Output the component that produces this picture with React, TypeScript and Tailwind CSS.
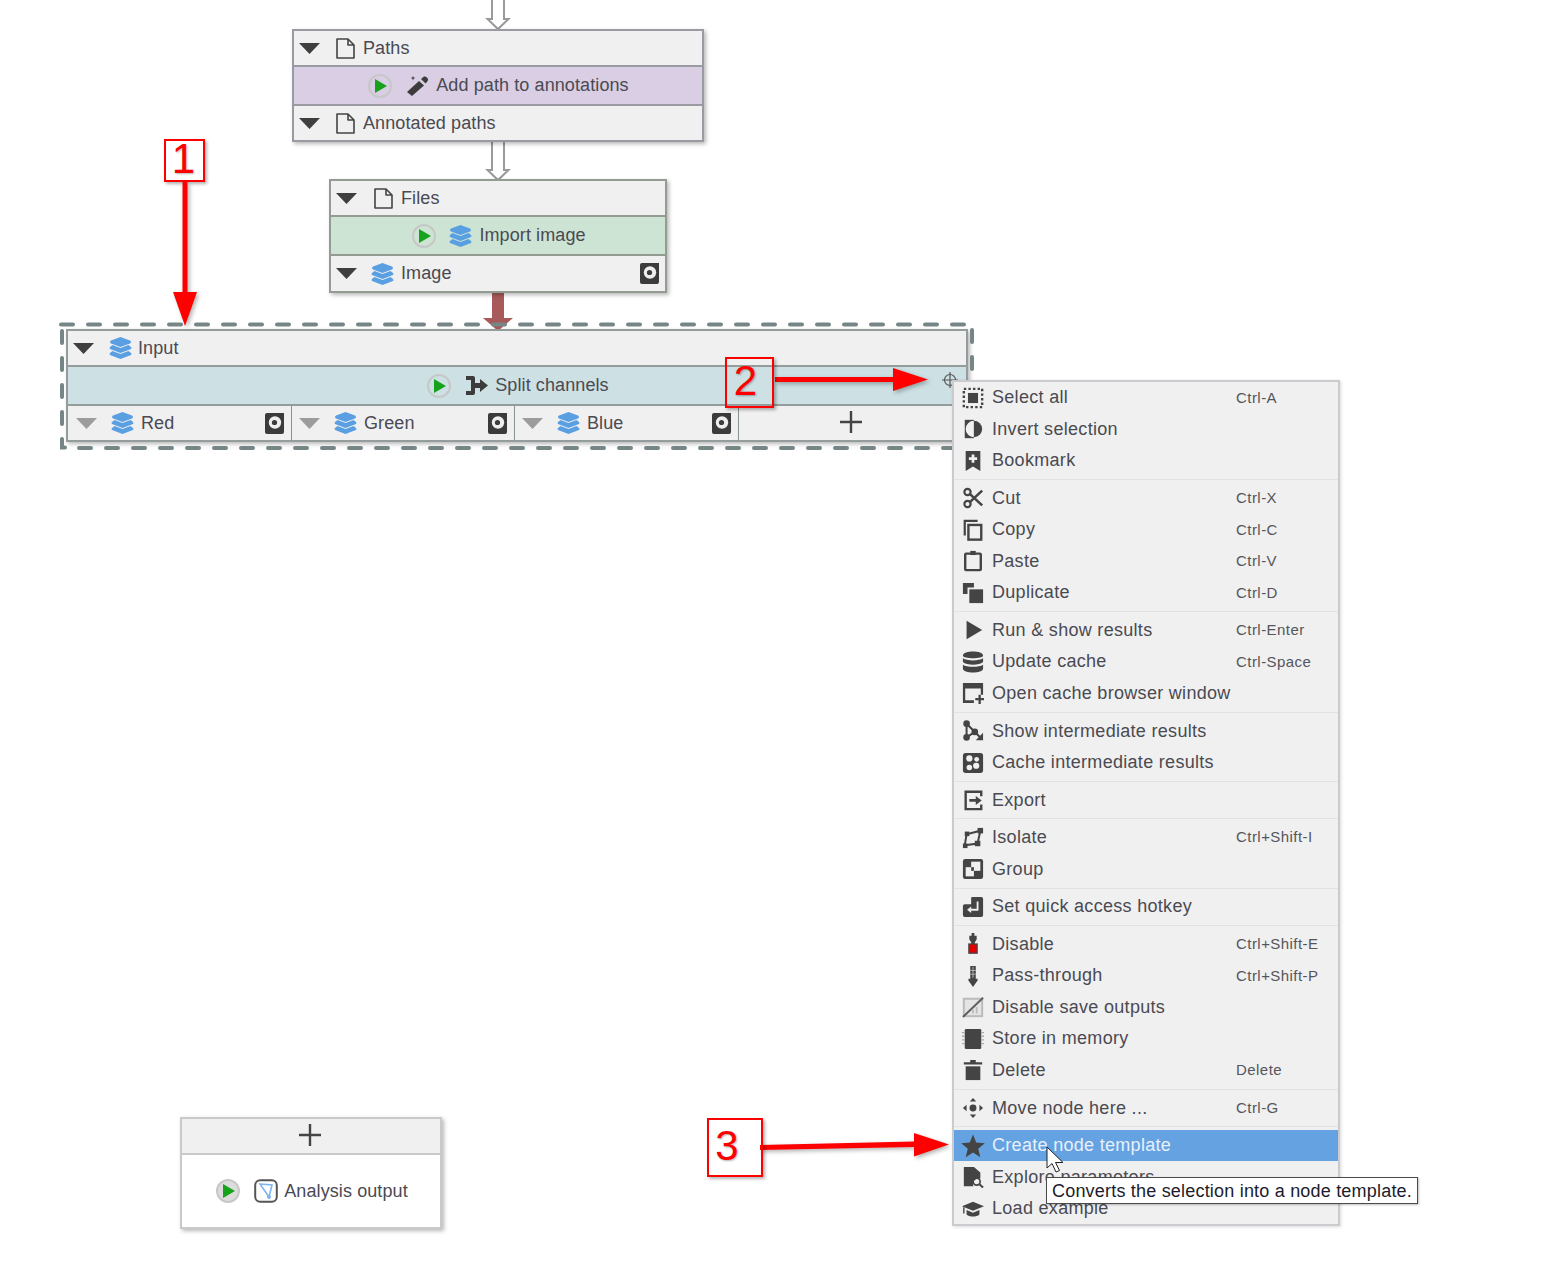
import React from "react";

const F = "#444444";
const Svg = ({ s = 22, children, v = "0 0 24 24" }: { s?: number; children: React.ReactNode; v?: string }) => (
  <svg width={s} height={s} viewBox={v} className="block shrink-0">{children}</svg>
);

const Caret = ({ gray }: { gray?: boolean }) => (
  <svg width="21" height="11" viewBox="0 0 21 11" className="block shrink-0"><path d="M0 0H21L10.5 11Z" fill={gray ? "#9c9c9c" : "#3f3f3f"} /></svg>
);
const FileI = () => (
  <svg width="19" height="21" viewBox="0 0 19 21" className="block shrink-0"><path d="M1 1H12L18 7V20H1Z M12 1V7H18" fill="none" stroke="#444" strokeWidth="1.6" strokeLinejoin="round" /></svg>
);
const Layers = () => (
  <svg width="23" height="22" viewBox="0 0 23 22" className="block shrink-0" fill="#5b9fe3">
    <path d="M11.5 0 L21 3.5 Q23 5 21 6.5 L11.5 10 L2 6.5 Q0 5 2 3.5Z" />
    <path d="M3.5 8 L11.5 11 L19.5 8 L22 10 Q23 11 22 12 L11.5 16 L1 12 Q0 11 1 10Z" />
    <path d="M3.5 14 L11.5 17 L19.5 14 L22 16 Q23 17 22 18 L11.5 22 L1 18 Q0 17 1 16Z" />
  </svg>
);
const Disk = () => (
  <svg width="19" height="21" viewBox="0 0 19 21" className="block shrink-0">
    <path d="M2 0H19V19Q19 21 17 21H2Q0 21 0 19V2Q0 0 2 0Z" fill="#3b3b3b" />
    <circle cx="10" cy="9.5" r="6.2" fill="#eee" /><circle cx="9.5" cy="9.5" r="2.6" fill="#3b3b3b" />
  </svg>
);
const Play = ({ bg = "bg-transparent" }: { bg?: string }) => (
  <div className={`flex h-[24px] w-[24px] shrink-0 items-center justify-center rounded-full border-2 border-[#c6c8c8] ${bg}`}>
    <svg width="13" height="14" viewBox="0 0 13 14" className="block"><path d="M1 0L13 7L1 14Z" fill="#17a21b" /></svg>
  </div>
);
const Wand = () => (
  <svg width="23" height="23" viewBox="0 0 23 23" className="block shrink-0">
    <path d="M1 18L13 7L18 11.5L6 22Z" fill="#3c3c3c" />
    <path d="M15 5L18 2.5Q20 2 21.5 4T21 8L19.5 9.5Z" fill="#3c3c3c" />
    <path d="M7 2L7.7 3.6L9.5 4L7.7 4.6L7 6.5L6.3 4.6L4.5 4L6.3 3.6Z" fill="#3c3c3c" />
  </svg>
);
const Split = () => (
  <svg width="22" height="19" viewBox="0 0 22 19" className="block shrink-0" fill="#3c3c3c">
    <path d="M0 0H7Q9 0 9 2V7H14V3L22 9.5L14 16V12H9V17Q9 19 7 19H0V15H5V4H0Z" />
  </svg>
);

const Row = ({ className = "", children }: { className?: string; children: React.ReactNode }) => (
  <div className={`flex items-center ${className}`}>{children}</div>
);

const ICONS: Record<string, React.ReactNode> = {
  select: <Svg><rect x="2" y="2" width="20" height="20" fill="none" stroke={F} strokeWidth="2.6" strokeDasharray="2.6 2.4" /><rect x="6.5" y="6.5" width="11" height="11" fill={F} /></Svg>,
  invert: <Svg><rect x="3" y="2" width="10" height="20" fill={F} /><path d="M13 3A9 9 0 0 0 13 21Z" fill="#f0f0f0" /><path d="M13 3A9 9 0 0 1 13 21Z" fill={F} /></Svg>,
  bookmark: <Svg><path d="M4 1H20V23L12 18L4 23Z" fill={F} /><path d="M10.5 5H13.5V8H16.5V11H13.5V14H10.5V11H7.5V8H10.5Z" fill="#f0f0f0" /></Svg>,
  cut: <Svg><circle cx="6" cy="5.5" r="3.4" fill="none" stroke={F} strokeWidth="2.4" /><circle cx="6" cy="18.5" r="3.4" fill="none" stroke={F} strokeWidth="2.4" /><path d="M8.5 7.5L22 20M8.5 16.5L22 4" stroke={F} strokeWidth="2.8" /></Svg>,
  copy: <Svg><path d="M3 18V2H17" fill="none" stroke={F} strokeWidth="2.4" /><rect x="7" y="6.5" width="14" height="16" fill="none" stroke={F} strokeWidth="2.6" /></Svg>,
  paste: <Svg><rect x="3.5" y="4" width="17" height="18" fill="none" stroke={F} strokeWidth="2.6" rx="1" /><path d="M9 5.5V1H15V5.5Z" fill={F} /></Svg>,
  dup: <Svg><path d="M1 1H13V6H6V13H1Z" fill={F} /><rect x="8" y="8" width="15" height="15" fill={F} /></Svg>,
  run: <Svg><path d="M5 2L22 12L5 22Z" fill={F} /></Svg>,
  db: <Svg><path d="M1 5C1 -1 23 -1 23 5C23 9 1 9 1 5ZM1 8C5 11 19 11 23 8V12C19 16 5 16 1 12ZM1 15C5 18 19 18 23 15V19C23 25 1 25 1 19Z" fill={F} /></Svg>,
  window: <Svg><path d="M1 1H23V14H20.5V7H3.5V20H13V23H1Z" fill={F} /><path d="M18 14H20.5V17.5H24V20H20.5V24H18V20H14.5V17.5H18Z" fill={F} /></Svg>,
  show: <Svg><circle cx="5" cy="4" r="3.6" fill={F} /><circle cx="5" cy="19" r="3.6" fill={F} /><circle cx="14" cy="13" r="3.6" fill={F} /><path d="M5 4V19M5 4L14 13L5 19M14 13L20 19" fill="none" stroke={F} strokeWidth="2.2" /><path d="M15 22H23V14Z" fill={F} /></Svg>,
  cachei: <Svg><rect x="1" y="1" width="22" height="22" rx="3" fill={F} /><circle cx="8" cy="7" r="3.4" fill="#f0f0f0" /><circle cx="16" cy="8" r="2.6" fill="#f0f0f0" /><circle cx="15.5" cy="15" r="3.4" fill="#f0f0f0" /><circle cx="8" cy="17" r="3" fill="#f0f0f0" /></Svg>,
  export: <Svg><path d="M21 8V3H4V22H21V17" fill="none" stroke={F} strokeWidth="2.6" /><path d="M8 11H15V7.5L21.5 12.5L15 17.5V14H8Z" fill={F} /></Svg>,
  isolate: <Svg><path d="M5 8L3 20L17 18L20 4Z" fill="none" stroke={F} strokeWidth="2.2" /><rect x="1" y="18" width="5" height="5" fill={F} /><rect x="3" y="5" width="5" height="5" fill={F} /><rect x="17" y="1" width="6" height="6" fill={F} /><rect x="14" y="15" width="6" height="6" fill={F} /></Svg>,
  group: <Svg><rect x="1" y="1" width="22" height="22" rx="2.5" fill={F} /><rect x="10" y="4" width="10" height="10" fill="#f0f0f0" /><rect x="4" y="10" width="9" height="10" fill="#f0f0f0" /><rect x="10" y="10" width="3" height="4" fill={F} /></Svg>,
  hotkey: <Svg><path d="M3 9H10V2Q10 1 11 1H21Q23 1 23 3V21Q23 23 21 23H3Q1 23 1 21V11Q1 9 3 9Z" fill={F} /><path d="M17 6V15H9" fill="none" stroke="#f0f0f0" strokeWidth="2" /><path d="M10 11.5V18.5L5.5 15Z" fill="#f0f0f0" /></Svg>,
  disable: <Svg><path d="M10.5 0H13.5V3H16V7L14 10V12H10V10L8 7V3H10.5Z" fill={F} /><rect x="7.5" y="12" width="9" height="10" fill="#e30000" stroke={F} strokeWidth="1.4" /></Svg>,
  pass: <Svg><path d="M9 1H15V15H17V17L12 24L7 17V15H9Z" fill={F} /><path d="M12 2V14M9 6H15M9 10H15" stroke="#b8b8b8" strokeWidth="1" /></Svg>,
  nosave: <Svg><rect x="2" y="3" width="20" height="19" fill="#e4e4e4" stroke="#bcbcbc" strokeWidth="2.2" /><rect x="15" y="12" width="2" height="7" fill="#bbb" /><rect x="11" y="15" width="2" height="4" fill="#bbb" /><path d="M1 23L23 2" stroke="#606060" strokeWidth="2.2" /></Svg>,
  store: <Svg><rect x="3" y="1" width="18" height="22" rx="1.5" fill={F} /><path d="M0 5H3M0 9H3M0 13H3M0 17H3M21 5H24M21 9H24M21 13H24M21 17H24" stroke="#aaa" strokeWidth="1.5" /></Svg>,
  del: <Svg><path d="M2 3.5H9V1H15V3.5H22V6H2Z" fill={F} /><path d="M4 8H20V23H4Z" fill={F} /></Svg>,
  move: <Svg><circle cx="12" cy="12" r="3.8" fill={F} /><path d="M12 1L15.5 5H8.5ZM12 23L15.5 19H8.5ZM1 12L5 8.5V15.5ZM23 12L19 8.5V15.5Z" fill={F} /></Svg>,
  star: <Svg s={24}><path d="M12 0.5L15.2 8.6L23.8 9.2L17.2 14.7L19.3 23.3L12 18.6L4.7 23.3L6.8 14.7L.2 9.2L8.8 8.6Z" fill={F} /></Svg>,
  explore: <Svg><path d="M2 1H13L20 7V14A6 6 0 0 0 12.5 22H2Z" fill={F} /><circle cx="16" cy="17" r="3.8" fill="none" stroke={F} strokeWidth="1.8" /><path d="M19 20L23 23.5" stroke={F} strokeWidth="2.2" /></Svg>,
  load: <Svg><path d="M0 9L12 4L24 9L12 14Z" fill={F} /><path d="M5 13L12 16L19 13V18C16 21 8 21 5 18Z" fill={F} /><path d="M2 10V17" stroke={F} strokeWidth="1.5" /></Svg>,
};

type Item = { i: string; t: string; k?: string };
const groups: { items: Item[] }[] = [
  { items: [{ i: "select", t: "Select all", k: "Ctrl-A" }, { i: "invert", t: "Invert selection" }, { i: "bookmark", t: "Bookmark" }] },
  { items: [{ i: "cut", t: "Cut", k: "Ctrl-X" }, { i: "copy", t: "Copy", k: "Ctrl-C" }, { i: "paste", t: "Paste", k: "Ctrl-V" }, { i: "dup", t: "Duplicate", k: "Ctrl-D" }] },
  { items: [{ i: "run", t: "Run & show results", k: "Ctrl-Enter" }, { i: "db", t: "Update cache", k: "Ctrl-Space" }, { i: "window", t: "Open cache browser window" }] },
  { items: [{ i: "show", t: "Show intermediate results" }, { i: "cachei", t: "Cache intermediate results" }] },
  { items: [{ i: "export", t: "Export" }] },
  { items: [{ i: "isolate", t: "Isolate", k: "Ctrl+Shift-I" }, { i: "group", t: "Group" }] },
  { items: [{ i: "hotkey", t: "Set quick access hotkey" }] },
  { items: [{ i: "disable", t: "Disable", k: "Ctrl+Shift-E" }, { i: "pass", t: "Pass-through", k: "Ctrl+Shift-P" }, { i: "nosave", t: "Disable save outputs" }, { i: "store", t: "Store in memory" }, { i: "del", t: "Delete", k: "Delete" }] },
  { items: [{ i: "move", t: "Move node here ...", k: "Ctrl-G" }] },
  { items: [{ i: "star", t: "Create node template" }, { i: "explore", t: "Explore parameters" }, { i: "load", t: "Load example" }] },
];

function Menu() {
  return (
    <div className="absolute left-[952px] top-[380px] w-[388px] border-2 border-[#cbcbcf] bg-[#f0f0f0] shadow-[1px_1px_3px_rgba(0,0,0,0.15)]">
      {groups.map((g, gi) => (
        <div key={gi}>
          {gi > 0 && (
            <div className="flex h-[6.1px] items-center"><div className="h-px w-full bg-[#e2e2e2]" /></div>
          )}
          {g.items.map((it) => {
            const active = it.t === "Create node template";
            return (
              <div key={it.t} className={`flex h-[31.5px] items-center ${active ? "bg-[#64a2e2] text-[#e8f0fb]" : "text-[#4a4a52]"}`}>
                <div className="flex w-[38px] shrink-0 items-center justify-center">{ICONS[it.i]}</div>
                <div className="w-[244px] shrink-0 whitespace-nowrap text-[18px] tracking-[0.3px]">{it.t}</div>
                {it.k && <div className="whitespace-nowrap text-[15px] tracking-[0.45px] text-[#55555c]">{it.k}</div>}
              </div>
            );
          })}
        </div>
      ))}
    </div>
  );
}

const nodeBase = "absolute flex flex-col bg-[#f0f0f0] shadow-[2px_2px_4px_rgba(0,0,0,0.28)] text-[18px] tracking-[0.1px] text-[#4a4a52] whitespace-nowrap";

const OutCell = ({ name, w, capL, iconGap }: { name: string; w: string; capL: string; iconGap: string }) => (
  <div className={`flex h-full items-center border-r-[1.5px] border-[#8b9292] ${w} ${capL}`}>
    <Caret gray />
    <div className={iconGap}><Layers /></div>
    <span className="ml-[7px] flex-1">{name}</span>
    <div className="mr-[7px]"><Disk /></div>
  </div>
);

function Connectors() {
  return (
    <svg width="1544" height="1265" viewBox="0 0 1544 1265" className="pointer-events-none absolute left-0 top-0 block">
      <path d="M492 -2V19H487.5L498 29L508.5 19H504V-2" fill="#fff" stroke="#9a9a9a" strokeWidth="2" />
      <path d="M492 141V170H487.5L498 180L508.5 170H504V141" fill="#fff" stroke="#9a9a9a" strokeWidth="2" />
      <path d="M492 292H504V318H513L498 331L483 318H492Z" fill="#a85a5a" />
    </svg>
  );
}

function Selection() {
  return (
    <svg width="1544" height="1265" viewBox="0 0 1544 1265" className="pointer-events-none absolute left-0 top-0 block" fill="none" stroke="#768585" strokeWidth="4" strokeLinecap="round">
      <path d="M61 324.5H973" strokeDasharray="12 15" />
      <path d="M972 330V372" strokeDasharray="12 15" />
      <path d="M62 331V426" strokeDasharray="12 15" />
      <path d="M62 439V447.5H65" />
      <path d="M79 448H955" strokeDasharray="12 15" />
    </svg>
  );
}

function RedArrows() {
  return (
    <svg width="1544" height="1265" viewBox="0 0 1544 1265" className="pointer-events-none absolute left-0 top-0 block drop-shadow-[2px_2px_2px_rgba(0,0,0,0.3)]" fill="#ff0000">
      <path d="M182.5 182H187.5V292H197L185 326L173 292H182.5Z" />
      <path d="M775 377H893V368L928 379.5L893 391V382H775Z" />
      <path d="M760 1145L914 1141.5V1133L949 1144.5L914 1156.5V1147L760 1150Z" />
    </svg>
  );
}

const Badge = ({ n, cls }: { n: string; cls: string }) => (
  <div className={`absolute flex items-center justify-center border-2 border-[#ff0000] text-[42px] leading-none text-[#ff0000] shadow-[2px_2px_3px_rgba(0,0,0,0.3)] [text-shadow:1px_1px_2px_rgba(0,0,0,0.3)] ${cls}`}>{n}</div>
);

export default function App() {
  return (
    <div className="relative h-[1265px] w-[1544px] overflow-hidden bg-white font-['Liberation_Sans',Arial,sans-serif]">
      <Connectors />

      {/* Paths node */}
      <div className={`${nodeBase} left-[292px] top-[29px] h-[113px] w-[412px] border-2 border-[#9a9aa2]`}>
        <Row className="h-[34px] pl-[5px]"><Caret /><div className="ml-[16px]"><FileI /></div><span className="ml-[8px]">Paths</span></Row>
        <Row className="h-[41px] justify-center gap-[14px] border-y-2 border-[#9a9aa2] bg-[#d9cee3] pl-[1px]"><Play /><div className="flex items-center gap-[7px]"><Wand /><span>Add path to annotations</span></div></Row>
        <Row className="flex-1 pl-[5px]"><Caret /><div className="ml-[16px]"><FileI /></div><span className="ml-[8px]">Annotated paths</span></Row>
      </div>

      {/* Files node */}
      <div className={`${nodeBase} left-[329px] top-[179px] h-[114px] w-[338px] border-2 border-[#939b93]`}>
        <Row className="h-[34px] pl-[5px]"><Caret /><div className="ml-[17px]"><FileI /></div><span className="ml-[8px]">Files</span></Row>
        <Row className="h-[41px] justify-center gap-[13px] border-y-2 border-[#939b93] bg-[#cde3d3] pl-[2px]"><Play /><div className="flex items-center gap-[7px]"><Layers /><span>Import image</span></div></Row>
        <Row className="flex-1 pl-[5px] pr-[6px]"><Caret /><div className="ml-[14px]"><Layers /></div><span className="ml-[7px] flex-1">Image</span><Disk /></Row>
      </div>

      {/* Input node */}
      <div className={`${nodeBase} left-[66px] top-[329px] h-[113px] w-[902px] border-2 border-[#959c9c]`}>
        <Row className="h-[34px] pl-[5px]"><Caret /><div className="ml-[15px]"><Layers /></div><span className="ml-[6px]">Input</span></Row>
        <div className="relative flex h-[41px] items-center justify-center gap-[15px] border-y-2 border-[#959c9c] bg-[#cde0e4] pl-[2px]">
          <Play />
          <div className="flex items-center gap-[7px]"><Split /><span>Split channels</span></div>
          <svg width="16" height="16" viewBox="0 0 16 16" className="absolute right-[8px] top-[5px] block" fill="none" stroke="#555" strokeWidth="1.2"><circle cx="8" cy="8" r="5.5" /><path d="M8 0V16M0 8H16" /></svg>
        </div>
        <div className="flex flex-1 items-center">
          <OutCell name="Red" w="w-[224px]" capL="pl-[8px]" iconGap="ml-[14px]" />
          <OutCell name="Green" w="w-[223px]" capL="pl-[7px]" iconGap="ml-[14px]" />
          <OutCell name="Blue" w="w-[224px]" capL="pl-[7px]" iconGap="ml-[14px]" />
          <div className="flex h-full flex-1 items-center justify-center pb-[2px] pr-[4px]">
            <svg width="22" height="22" viewBox="0 0 22 22" className="block"><path d="M11 0V22M0 11H22" stroke="#444" strokeWidth="2.4" /></svg>
          </div>
        </div>
      </div>

      <Selection />

      {/* Analysis output node */}
      <div className={`${nodeBase} left-[180px] top-[1117px] h-[112px] w-[262px] border-2 border-[#c9c9c9] !bg-white`}>
        <div className="flex h-[36px] items-center justify-center border-b-2 border-[#c9c9c9] bg-[#f0f0f0] pb-[2px] pr-[3px]">
          <svg width="22" height="22" viewBox="0 0 22 22" className="block"><path d="M11 0V22M0 11H22" stroke="#444" strokeWidth="2.4" /></svg>
        </div>
        <div className="flex flex-1 items-center justify-center gap-[14px] pl-[2px]">
          <Play bg="bg-[#dcdcdc]" />
          <div className="flex items-center gap-[6px]">
            <svg width="24" height="24" viewBox="0 0 24 24" className="block shrink-0"><rect x="1.2" y="1.2" width="21.6" height="21.6" rx="5" fill="#fff" stroke="#555" strokeWidth="2" /><path d="M6 5L18 6L15 18Z" fill="none" stroke="#7fb4ee" strokeWidth="1.6" /><circle cx="15" cy="18" r="2" fill="#7fb4ee" /></svg>
            <span>Analysis output</span>
          </div>
        </div>
      </div>

      <Badge n="1" cls="left-[164px] top-[139px] h-[43px] w-[41px] pb-[3px] pr-[2px]" />
      <RedArrows />
      <Badge n="2" cls="left-[725px] top-[357px] h-[51px] w-[49px] pb-[4px] pr-[8px]" />
      <Badge n="3" cls="left-[707px] top-[1118px] h-[59px] w-[56px] pb-[4px] pr-[16px]" />

      <Menu />

      {/* Tooltip */}
      <div className="absolute left-[1046px] top-[1177px] flex h-[27px] w-[372px] items-center whitespace-nowrap border border-[#4a4a4a] bg-white pl-[5px] pt-[2px] text-[18px] tracking-[0.2px] text-[#1c1c2c] shadow-[1px_1px_2px_rgba(0,0,0,0.25)]">Converts the selection into a node template.</div>

      {/* Cursor */}
      <svg width="20" height="28" viewBox="0 0 20 28" className="absolute left-[1046px] top-[1146px] block">
        <path d="M1 1V22L6 17.5L10 26L13.5 24.5L9.5 16.5H17Z" fill="#fff" stroke="#222" strokeWidth="1" />
      </svg>
    </div>
  );
}
